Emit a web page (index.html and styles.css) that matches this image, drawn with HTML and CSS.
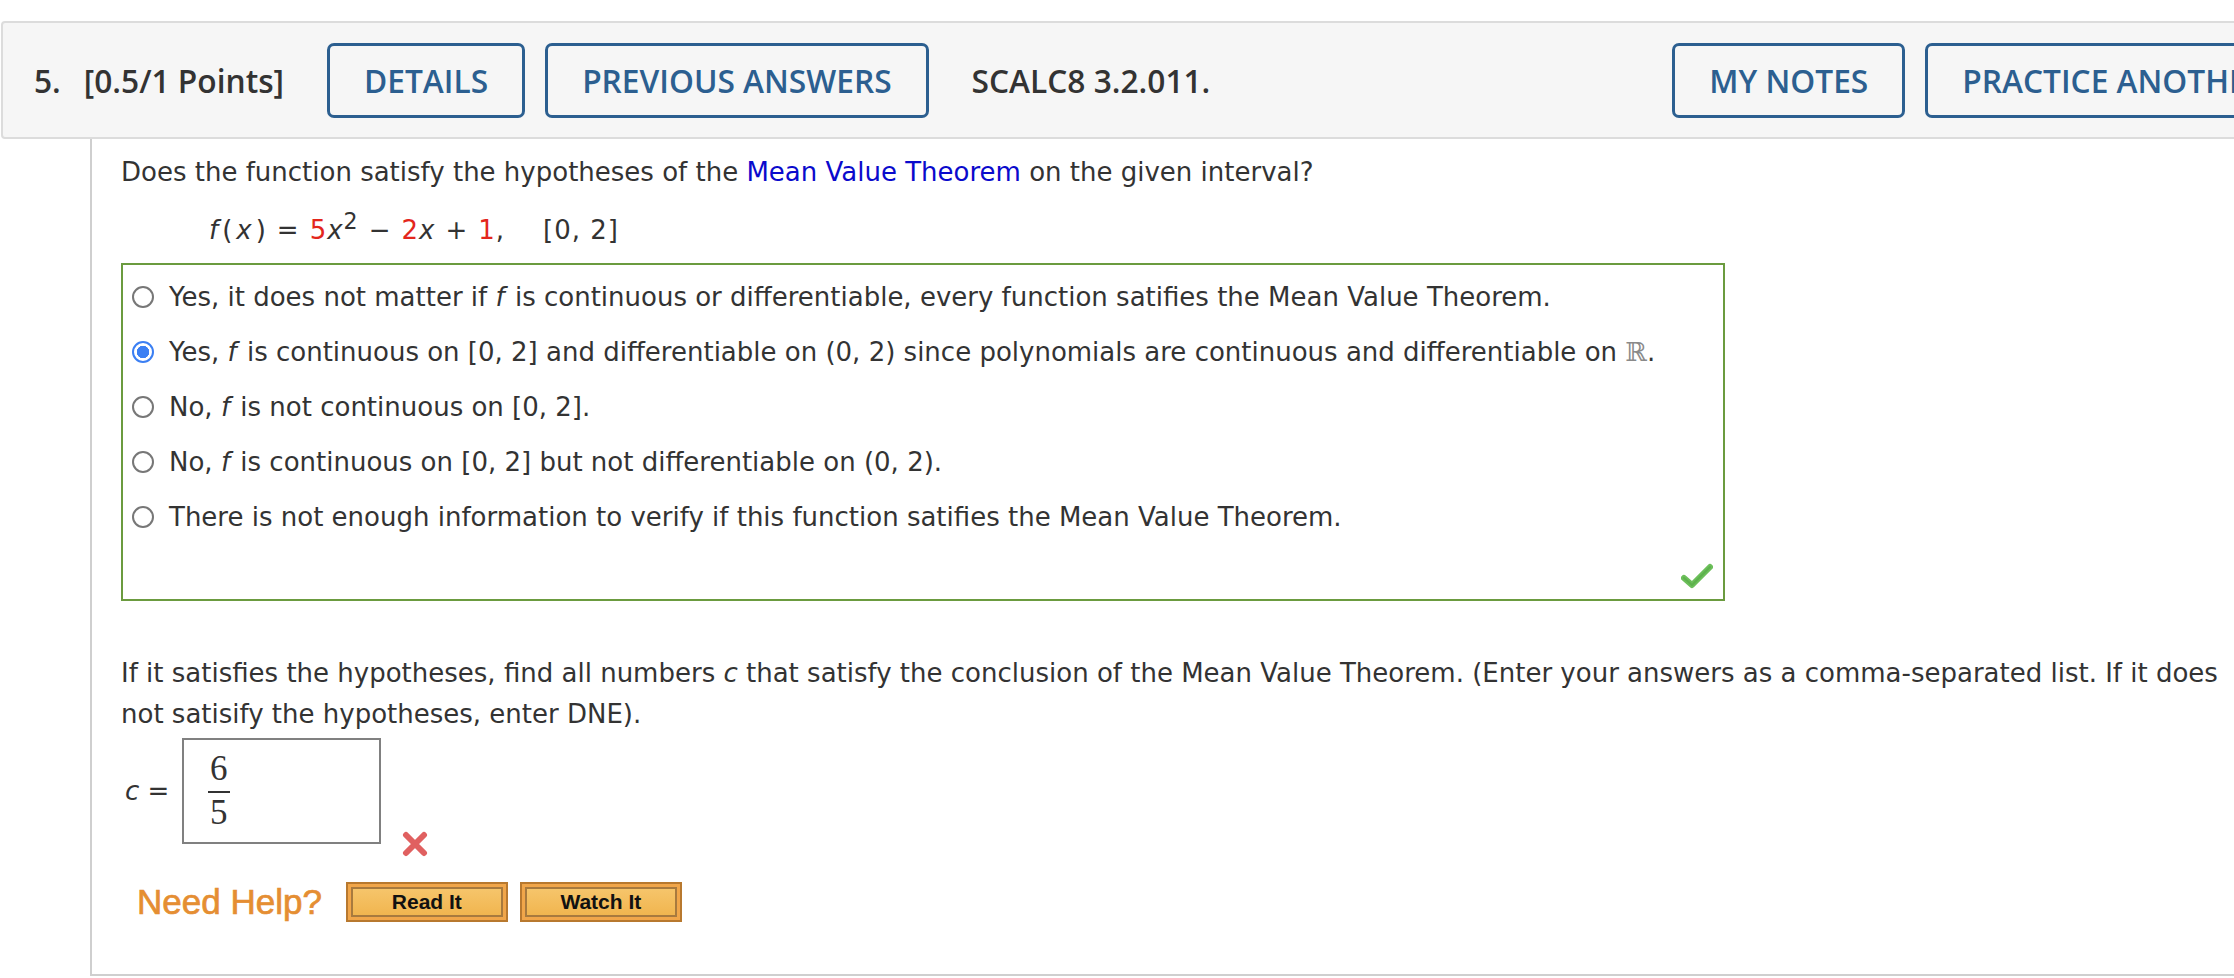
FILE: index.html
```html
<!DOCTYPE html>
<html>
<head>
<meta charset="utf-8">
<link rel="stylesheet" href="styles.css">
</head>
<body>
<div class="page">
  <div class="qhead">
    <span class="qnum">5.</span>
    <span class="qpoints">[0.5/1 Points]</span>
    <span class="hbtn first">DETAILS</span>
    <span class="hbtn">PREVIOUS ANSWERS</span>
    <span class="qcode">SCALC8 3.2.011.</span>
    <span class="hbtn notes">MY NOTES</span>
    <span class="hbtn">PRACTICE ANOTHER</span>
  </div>
  <div class="panel">
    <p class="qtext">Does the function satisfy the hypotheses of the <span class="link">Mean Value Theorem</span> on the given interval?</p>
    <p class="formula"><i class="fi">f</i>(<i class="xi">x</i>)<span class="op">=</span><span class="red">5</span><i>x</i><sup>2</sup><span class="op">−</span><span class="red">2</span><i>x</i><span class="op">+</span><span class="red">1</span>,<span class="intv">[0, 2]</span></p>
    <div class="choices">
      <div class="choice"><span class="radio"></span><span>Yes, it does not matter if <i>f</i> is continuous or differentiable, every function satifies the Mean Value Theorem.</span></div>
      <div class="choice"><span class="radio on"></span><span>Yes, <i>f</i> is continuous on [0, 2] and differentiable on (0, 2) since polynomials are continuous and differentiable on <span class="reals">ℝ</span>.</span></div>
      <div class="choice"><span class="radio"></span><span>No, <i>f</i> is not continuous on [0, 2].</span></div>
      <div class="choice"><span class="radio"></span><span>No, <i>f</i> is continuous on [0, 2] but not differentiable on (0, 2).</span></div>
      <div class="choice"><span class="radio"></span><span>There is not enough information to verify if this function satifies the Mean Value Theorem.</span></div>
      <div class="mark">
        <svg width="32" height="28" viewBox="0 0 32 28"><path d="M3 16 L11 23 L29 5" fill="none" stroke="#6cbf5a" stroke-width="6" stroke-linecap="round" stroke-linejoin="round"/><path d="M3 16 L11 23 L29 5" fill="none" stroke="#4ea33f" stroke-width="2" stroke-linecap="round" stroke-linejoin="round" opacity="0.5"/></svg>
      </div>
    </div>
    <p class="qtext2">If it satisfies the hypotheses, find all numbers <i>c</i> that satisfy the conclusion of the Mean Value Theorem. (Enter your answers as a comma-separated list. If it does not satisify the hypotheses, enter DNE).</p>
    <div class="answer">
      <span class="clabel"><i>c</i> =</span>
      <div class="abox">
        <span class="frac"><span class="num">6</span><span class="den">5</span></span>
      </div>
      <svg class="xmark" width="26" height="26" viewBox="0 0 26 26"><path d="M4 4 L22 22 M22 4 L4 22" stroke="#e06060" stroke-width="6" stroke-linecap="round"/></svg>
    </div>
    <div class="help">
      <span class="needhelp">Need Help?</span>
      <span class="hb">Read It</span>
      <span class="hb">Watch It</span>
    </div>
  </div>
</div>
</body>
</html>
```
FILE: styles.css
```css
html, body {
  margin: 0;
  padding: 0;
  background: #fff;
  overflow: hidden;
}
body {
  font-family: "DejaVu Sans", Verdana, sans-serif;
  color: #333;
}
.page {
  padding-top: 21px;
  width: 2600px;
}
.qhead {
  display: flex;
  align-items: center;
  height: 114px;
  margin-left: 1px;
  border: 2px solid #dcdcdc;
  border-radius: 4px 0 0 4px;
  background: #f6f6f6;
  font-family: "Open Sans", sans-serif;
  font-weight: 600;
  font-size: 31.7px;
  color: #333;
  white-space: nowrap;
}
.qnum { margin-left: 31px; }
.qpoints { margin-left: 23px; }
.hbtn {
  box-sizing: border-box;
  display: flex;
  align-items: center;
  height: 75px;
  padding: 0 34px;
  margin-left: 20px;
  border: 3px solid #2c5f90;
  border-radius: 7px;
  color: #2c5f90;
  font-weight: 600;
}
.hbtn.first { margin-left: 43px; }
.qcode { margin-left: 43px; }
.hbtn.notes { margin-left: 462px; }

.panel {
  margin-left: 90px;
  height: 835px;
  border-left: 2px solid #cfcfcf;
  border-bottom: 2px solid #cfcfcf;
  padding-left: 29px;
  font-size: 26px;
}
.qtext {
  margin: 0;
  padding-top: 13px;
  line-height: 40px;
}
.link { color: #0a0acc; }
.formula {
  margin: 18px 0 0 88px;
  line-height: 40px;
  letter-spacing: 1px;
}
.formula .fi { padding-right: 3px; }
.formula .xi { padding: 0 3px; }
.formula sup {
  font-size: 0.85em;
  line-height: 0;
}
.op { margin: 0 10px; }
.intv { margin-left: 38px; }
.red { color: #e3261c; }
.choices {
  margin-top: 13px;
  width: 1600px;
  border: 2px solid #6b9b3f;
  padding-top: 4px;
}
.choice {
  display: flex;
  align-items: center;
  height: 55px;
  padding-left: 9px;
}
.choice i { padding-right: 2px; }
.radio {
  box-sizing: border-box;
  width: 22px;
  height: 22px;
  border: 2px solid #777;
  border-radius: 50%;
  margin-right: 15px;
  flex: none;
}
.radio.on {
  border: 2px solid #3b7ff3;
  background: radial-gradient(circle, #3b7ff3 0 6px, #fff 6.5px);
}
.reals {
  color: #8a8a8a;
  font-family: "DejaVu Serif", serif;
}
.mark {
  display: flex;
  justify-content: flex-end;
  height: 55px;
  padding-right: 10px;
  align-items: flex-start;
  box-sizing: border-box;
  padding-top: 18px;
}
.qtext2 {
  margin: 52px 0 0 0;
  line-height: 41px;
  width: 2100px;
}
.answer {
  display: flex;
  align-items: flex-end;
  margin-top: 3px;
}
.clabel {
  align-self: center;
  margin-left: 4px;
  width: 57px;
}
.abox {
  box-sizing: border-box;
  width: 199px;
  height: 106px;
  border: 2px solid #808080;
  padding-left: 24px;
  display: flex;
  align-items: center;
}
.frac {
  display: inline-flex;
  flex-direction: column;
  align-items: center;
  font-family: "Liberation Serif", serif;
  font-size: 35px;
  line-height: 36px;
}
.num {
  border-bottom: 2px solid #333;
  padding: 0 2px 4px;
}
.den { padding-top: 2px; }
.xmark { margin-left: 21px; margin-bottom: -13px; }
.help {
  display: flex;
  align-items: center;
  margin-top: 38px;
}
.needhelp {
  font-family: "Liberation Sans", Arial, sans-serif;
  font-size: 35px;
  color: #e58e32;
  -webkit-text-stroke: 0.7px #e58e32;
  margin-left: 16px;
  margin-right: 24px;
}
.hb {
  box-sizing: border-box;
  width: 162px;
  height: 40px;
  margin-right: 12px;
  border: 2px solid #b8792f;
  background: linear-gradient(#f7c870, #f0b24a);
  box-shadow: inset 0 0 0 3px #f1a64a, inset 0 0 0 5px #a87a3e;
  display: flex;
  align-items: center;
  justify-content: center;
  font-family: "Liberation Sans", Arial, sans-serif;
  font-weight: bold;
  font-size: 21px;
  color: #111;
}
```
